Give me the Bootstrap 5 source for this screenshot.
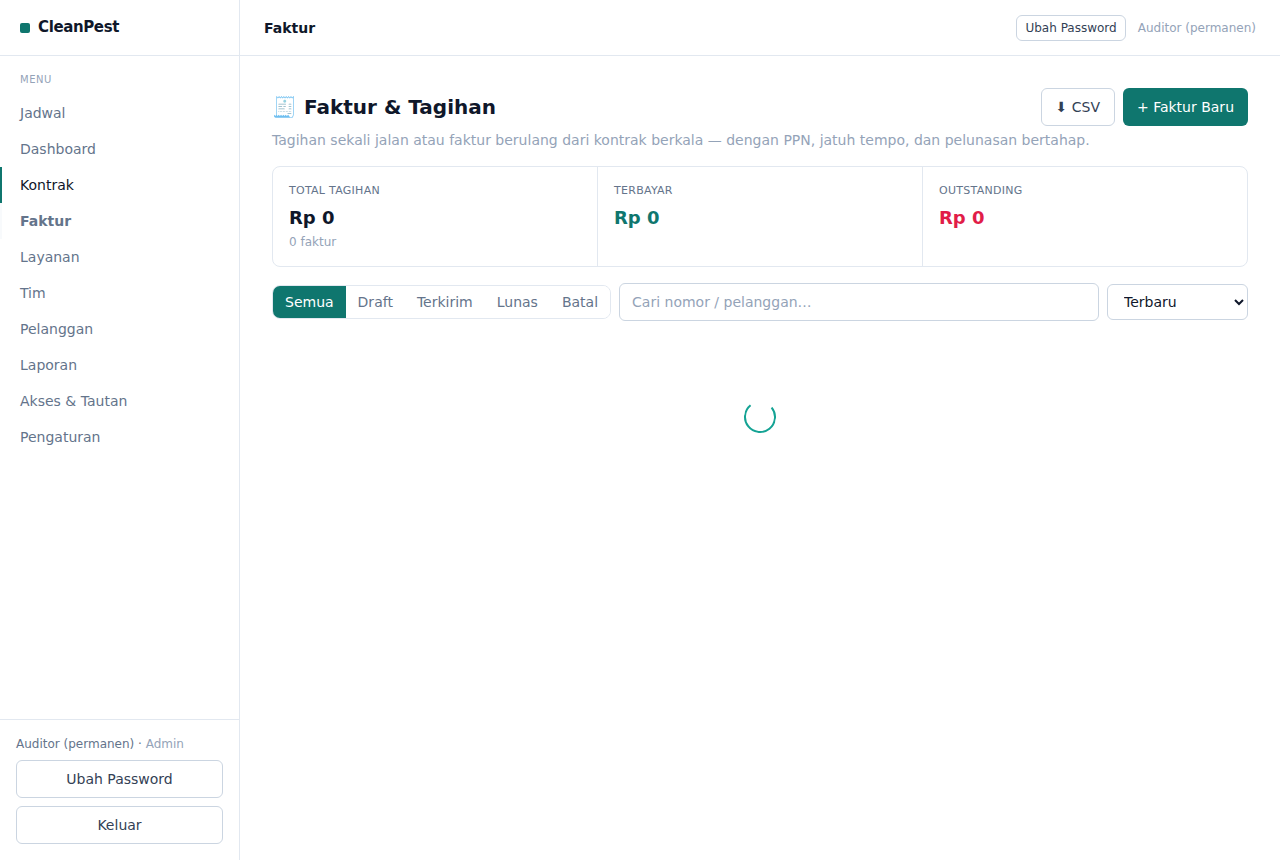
<!DOCTYPE html>
<html lang="id">
<head>
<meta charset="utf-8">
<meta name="viewport" content="width=device-width, initial-scale=1">
<title>Faktur – CleanPest</title>
<link href="https://cdn.jsdelivr.net/npm/bootstrap@5.3.0/dist/css/bootstrap.min.css" rel="stylesheet">
<style>
  :root { --ink:#0f172a; --slate:#64748b; --mute:#94a3b8; --line:#e2e8f0; --edge:#cbd5e1; --teal:#0f766e; }
  body { font-family:"DejaVu Sans", sans-serif; font-size:14px; line-height:20px; color:var(--ink); background:#fff; }
  .line { border-color:var(--line) !important; }
  .t-slate { color:var(--slate); }
  .t-mute { color:var(--mute); }
  .t-teal { color:var(--teal); }
  .t-rose { color:#e11d48; }
  .t-12 { font-size:12px; line-height:16px; }
  .sidebar { width:240px; }
  .bar { height:56px; }
  .brand { font-size:15px; line-height:19px; letter-spacing:-.025em; }
  .brand-dot { width:10px; height:10px; border-radius:2px; background:var(--teal); }
  .menu-label { font-size:10px; line-height:15px; letter-spacing:.05em; padding:0 20px; }
  .side-nav .nav-link { color:var(--slate); padding:8px 18px; border-left:2px solid transparent; }
  .side-nav .nav-link.active { color:var(--ink); border-left-color:var(--teal); }
  .side-nav .nav-link.current { font-weight:700; border-left-color:#f8fafc; }
  .btn { --bs-btn-font-size:14px; --bs-btn-line-height:20px; --bs-btn-padding-y:8px; --bs-btn-padding-x:14px; --bs-btn-border-radius:6px; }
  .btn-plain { --bs-btn-color:#334155; --bs-btn-bg:#fff; --bs-btn-border-color:var(--edge); --bs-btn-hover-color:#334155; --bs-btn-hover-bg:#f8fafc; --bs-btn-hover-border-color:var(--edge); }
  .btn-teal { --bs-btn-color:#fff; --bs-btn-bg:var(--teal); --bs-btn-border-width:0; --bs-btn-hover-color:#fff; --bs-btn-hover-bg:#115e59; }
  .btn-mini { --bs-btn-font-size:12px; --bs-btn-line-height:16px; --bs-btn-padding-y:4px; --bs-btn-padding-x:8px; }
  .page-title { font-size:20px; line-height:28px; }
  .stats { border-radius:8px; }
  .stat-label { font-size:11px; line-height:15px; margin-bottom:6px; letter-spacing:.025em; }
  .stat-value { font-size:18px; line-height:28px; margin-bottom:2px; }
  .tabs { border-radius:8px; }
  .tabs button { border:0; background:#fff; color:var(--slate); padding:6px 12px; }
  .tabs button.on { background:var(--teal); color:#fff; }
  .search { min-width:160px; height:38px; padding:8px 12px; font-size:14px; line-height:20px; border-color:var(--edge); border-radius:6px; color:var(--ink); }
  .search::placeholder { color:var(--mute); }
  .sorter { width:141px; height:36px; padding:0 0 0 12px; border:1px solid var(--edge); border-radius:6px; background:#fff; color:var(--ink); }
  .spinner-border { --bs-spinner-width:32px; --bs-spinner-height:32px; --bs-spinner-border-width:2px; color:#14a394; border-right-color:currentcolor; border-top-color:transparent; animation:none; transform:rotate(6deg); }
  .loading { padding-top:80px; }
</style>
</head>
<body>
<div class="d-flex min-vh-100">
  <aside class="sidebar d-flex flex-column flex-shrink-0 border-end line">
    <div class="bar d-flex align-items-center gap-2 px-3 border-bottom line">
      <span class="brand-dot ms-1"></span>
      <span class="brand fw-bold">CleanPest</span>
    </div>
    <div class="menu-label t-mute mt-3 mb-2">MENU</div>
    <nav class="side-nav nav flex-column">
      <a class="nav-link" href="#">Jadwal</a>
      <a class="nav-link" href="#">Dashboard</a>
      <a class="nav-link active" href="#">Kontrak</a>
      <a class="nav-link current" href="#">Faktur</a>
      <a class="nav-link" href="#">Layanan</a>
      <a class="nav-link" href="#">Tim</a>
      <a class="nav-link" href="#">Pelanggan</a>
      <a class="nav-link" href="#">Laporan</a>
      <a class="nav-link" href="#">Akses &amp; Tautan</a>
      <a class="nav-link" href="#">Pengaturan</a>
    </nav>
    <div class="mt-auto border-top line p-3 d-flex flex-column gap-2">
      <div class="t-12 t-slate">Auditor (permanen) · <span class="t-mute">Admin</span></div>
      <button type="button" class="btn btn-plain">Ubah Password</button>
      <button type="button" class="btn btn-plain">Keluar</button>
    </div>
  </aside>

  <div class="flex-grow-1">
    <header class="bar d-flex align-items-center justify-content-between px-4 border-bottom line">
      <span class="fw-bold">Faktur</span>
      <div class="d-flex align-items-center t-12">
        <button type="button" class="btn btn-plain btn-mini me-2">Ubah Password</button>
        <span class="t-mute ms-1">Auditor (permanen)</span>
      </div>
    </header>

    <main class="p-4">
      <div class="p-2">
        <div class="d-flex flex-wrap align-items-center justify-content-between gap-2 mb-1">
          <h1 class="page-title fw-bold m-0">🧾 Faktur &amp; Tagihan</h1>
          <div class="d-flex gap-2">
            <button type="button" class="btn btn-plain">⬇ CSV</button>
            <button type="button" class="btn btn-teal">+ Faktur Baru</button>
          </div>
        </div>
        <p class="t-mute mb-3">Tagihan sekali jalan atau faktur berulang dari kontrak berkala — dengan PPN, jatuh tempo, dan pelunasan bertahap.</p>

        <section class="stats row g-0 border line mb-3">
          <div class="col p-3 border-end line">
            <div class="stat-label t-slate">TOTAL TAGIHAN</div>
            <div class="stat-value fw-bold">Rp 0</div>
            <div class="t-12 t-mute">0 faktur</div>
          </div>
          <div class="col p-3 border-end line">
            <div class="stat-label t-slate">TERBAYAR</div>
            <div class="stat-value fw-bold t-teal">Rp 0</div>
          </div>
          <div class="col p-3">
            <div class="stat-label t-slate">OUTSTANDING</div>
            <div class="stat-value fw-bold t-rose">Rp 0</div>
          </div>
        </section>

        <div class="d-flex align-items-center gap-2">
          <div class="tabs d-flex flex-shrink-0 border line overflow-hidden">
            <button type="button" class="on">Semua</button>
            <button type="button">Draft</button>
            <button type="button">Terkirim</button>
            <button type="button">Lunas</button>
            <button type="button">Batal</button>
          </div>
          <input type="search" class="search form-control flex-fill w-auto" placeholder="Cari nomor / pelanggan…" aria-label="Cari nomor / pelanggan">
          <select class="sorter flex-shrink-0" aria-label="Urutkan">
            <option>Terbaru</option>
            <option>Terlama</option>
          </select>
        </div>

        <div class="loading d-flex justify-content-center">
          <div class="spinner-border" role="status" aria-label="Memuat"></div>
        </div>
      </div>
    </main>
  </div>
</div>
<script src="https://cdn.jsdelivr.net/npm/bootstrap@5.3.0/dist/js/bootstrap.bundle.min.js"></script>
</body>
</html>
